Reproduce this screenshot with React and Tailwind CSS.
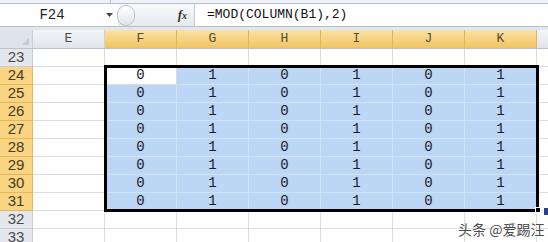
import React from 'react';

const cols = ['E', 'F', 'G', 'H', 'I', 'J', 'K'];
const rows = [23, 24, 25, 26, 27, 28, 29, 30, 31, 32, 33];
const vals = { F: 0, G: 1, H: 0, I: 1, J: 0, K: 1 };

const isSelRow = (r) => r >= 24 && r <= 31;
const isSelCol = (c) => c !== 'E';

const ColHeader = ({ c }) => (
  <div
    className={
      'w-[72px] shrink-0 h-full flex items-center justify-center border-r text-[13px] ' +
      (isSelCol(c)
        ? 'bg-gradient-to-b from-[#fae3a6] to-[#f2c35f] border-[#e2b45a] text-[#5b4a2a]'
        : 'bg-gradient-to-b from-[#f3f5f8] to-[#e1e5eb] border-[#c9d1db] text-[#4c4c4c]')
    }
  >
    {c}
  </div>
);

const RowHeader = ({ r }) => (
  <div
    className={
      'w-[33px] shrink-0 h-full flex items-center justify-center border-r border-b font-["Liberation_Sans",sans-serif] text-[15px] ' +
      (isSelRow(r)
        ? 'bg-[#f8d483] border-[#e4b95e] text-[#4a3c1e]'
        : 'bg-[#e4e8ee] border-[#c5cdd8] text-[#4a4a4a]')
    }
  >
    {r}
  </div>
);

const Cell = ({ r, c }) => {
  const sel = isSelRow(r) && isSelCol(c);
  const active = r === 24 && c === 'F';
  let cls = 'bg-white border-[#dadcdd]';
  if (sel && !active) cls = 'bg-[#bcd7f6] border-[#d3e3f7]';
  return (
    <div
      className={
        'w-[72px] shrink-0 h-full flex items-center justify-center border-r border-b text-[14px] text-[#1a1a2a] ' +
        cls
      }
    >
      {sel ? vals[c] : ''}
    </div>
  );
};

export default function App() {
  return (
    <div className="relative w-[548px] h-[242px] overflow-hidden bg-white font-['Liberation_Mono',monospace]">
      {/* ribbon bottom edge */}
      <div className="h-[3px] flex bg-[#eef1f5]">
        <div className="w-[111px] border-r border-[#b8c2ce]" />
      </div>

      {/* formula bar */}
      <div className="h-[24px] flex border-y border-[#b6c0cc] bg-white">
        <div className="w-[100px] flex items-center justify-center text-[14px] text-[#1f1f1f] pl-1">F24</div>
        <div className="w-[18px] flex items-center justify-center">
          <svg width="7" height="4" viewBox="0 0 7 4">
            <path d="M0 0h7L3.5 4z" fill="#444" />
          </svg>
        </div>
        <div className="w-[77px] flex items-center bg-gradient-to-b from-[#f7f8fa] to-[#e6eaef] border-r border-[#c3ccd6]">
          <div className="w-[18px] h-[21px] rounded-full border border-[#b9c2cc] bg-gradient-to-b from-white to-[#dfe4ea] -ml-[1px]" />
          <div className="flex-1" />
          <span className="pr-[7px] font-['Liberation_Serif',serif] italic font-bold text-[13px] text-[#333]">
            f<span className="text-[10px]">x</span>
          </span>
        </div>
        <div className="flex-1 flex items-center pl-[12px] text-[13px] text-[#111]">=MOD(COLUMN(B1),2)</div>
      </div>

      <div className="h-[3px] bg-[#e2e7ed]" />

      {/* column headers */}
      <div className="h-[19px] flex border-b border-[#b9c3cf]">
        <div className="w-[33px] shrink-0 h-full bg-[#dfe4ea] border-r border-[#c5cdd8] flex items-end justify-end p-[3px]">
          <svg width="7" height="7" viewBox="0 0 7 7">
            <path d="M7 0v7H0z" fill="#c4cbd4" />
          </svg>
        </div>
        {cols.map((c) => (
          <ColHeader key={c} c={c} />
        ))}
        <div className="flex-1 bg-gradient-to-b from-[#f3f5f8] to-[#e1e5eb]" />
      </div>

      {/* rows */}
      {rows.map((r) => (
        <div key={r} className="h-[18px] flex">
          <RowHeader r={r} />
          {cols.map((c) => (
            <Cell key={c} r={r} c={c} />
          ))}
          <div className="flex-1 border-b border-[#dadcdd]" />
        </div>
      ))}

      {/* selection border + fill handle */}
      <div className="absolute left-[104px] top-[65px] w-[435px] h-[147px] border-[3px] border-black pointer-events-none" />
      <div className="absolute left-[535px] top-[207px] w-[6px] h-[6px] bg-black border border-white" />
      <div className="absolute left-[543px] top-[207px] w-[8px] h-[9px] bg-[#2c3e8c] border border-white" />

      {/* watermark */}
      <div className="absolute left-[458px] top-[219px] font-['Noto_Sans_CJK_SC',sans-serif] text-[14px] text-[#4b4b4b] [text-shadow:0_0_2px_#fff,0_0_2px_#fff]">
        头条 @爱踢汪
      </div>
    </div>
  );
}
